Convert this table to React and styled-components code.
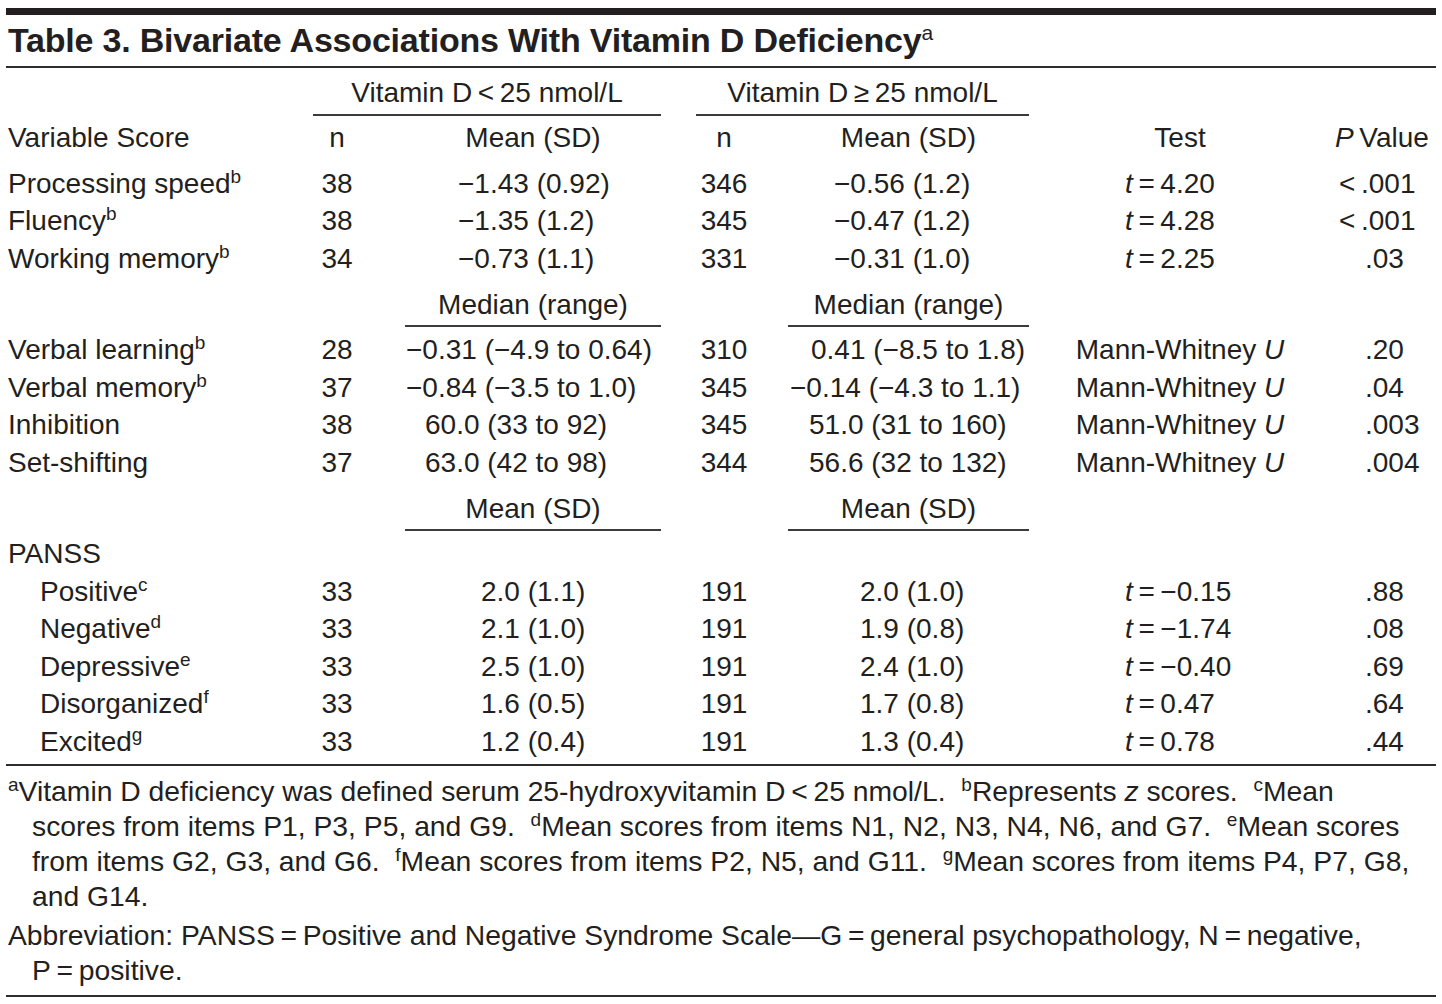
import React from 'react';
import styled, { createGlobalStyle } from 'styled-components';

const FONT = `"Liberation Sans", Arial, sans-serif`;
const INK = '#231f20';
const COLS = '307px 48px 44px 256px 39px 48px 40px 241px 302px 105px';

const Global = createGlobalStyle`
  html, body { margin: 0; padding: 0; background: #fff; }
  body { font-family: ${FONT}; color: ${INK}; }
`;

const Page = styled.div`
  width: 1430px;
  padding: 8px 0 0 6px;
`;

const TopBar = styled.div`
  height: 7px;
  background: ${INK};
`;

const Title = styled.h1`
  margin: 0;
  height: 51px;
  padding-left: 2px;
  font-size: 34px;
  font-weight: 700;
  line-height: 51px;
  letter-spacing: -0.2px;
  white-space: nowrap;
  border-bottom: 2px solid #2e2c2d;
`;

const Body = styled.div`
  padding-bottom: 4px;
  border-bottom: 2px solid #2e2c2d;
`;

const Row = styled.div`
  display: grid;
  grid-template-columns: ${COLS};
  font-size: 28px;
  line-height: 37.5px;
  white-space: nowrap;
  padding: ${(p) => p.$pad || '0'};
`;

const Spanner = styled.div`
  grid-column: ${(p) => p.$span};
  margin-left: ${(p) => p.$shift || 0}px;
  line-height: 38px;
  padding-bottom: 2px;
  text-align: center;
  border-bottom: 2px solid #3c3a3b;
`;

const SubHead = styled.div`
  grid-column: ${(p) => p.$col};
  line-height: 38px;
  padding-bottom: 1px;
  text-align: center;
  border-bottom: 2px solid #3c3a3b;
`;

const Label = styled.div`
  grid-column: 1;
  padding-left: ${(p) => (p.$sub ? 34 : 2)}px;
`;

const Count = styled.div`
  grid-column: ${(p) => p.$col};
  text-align: center;
`;

const Value = styled.div`
  grid-column: ${(p) => p.$col};
  padding-left: ${(p) => p.$indent || 0}px;
  text-align: ${(p) => (p.$center ? 'center' : 'left')};
`;

const Test = styled.div`
  grid-column: 9;
  text-align: ${(p) => (p.$left ? 'left' : 'center')};
  padding-left: ${(p) => (p.$left ? 96 : 0)}px;
`;

const PVal = styled.div`
  grid-column: 10;
  padding-left: ${(p) => p.$indent}px;
`;

const Sup = styled.sup`
  font-size: 19px;
  line-height: 0;
  vertical-align: 10px;
`;

const TitleSup = styled.sup`
  font-size: 21px;
  font-weight: 400;
  line-height: 0;
  vertical-align: 12px;
`;

const Notes = styled.div`
  padding: 7.5px 0 7.5px 2px;
  border-bottom: 2px solid #2e2c2d;
  font-size: 28.3px;
  line-height: 35px;
`;

const Note = styled.p`
  margin: ${(p) => (p.$gap ? '4px' : '0')} 0 0;
  padding-left: 24px;
  text-indent: -24px;
  white-space: nowrap;
`;

const NoteSup = styled.sup`
  font-size: 19px;
  line-height: 0;
  vertical-align: 10px;
`;

const T = '\u2009';
const tStat = (v) => (
  <>
    <i>t</i>
    {T}={T}
    {v}
  </>
);
const MW = (
  <>
    Mann-Whitney <i>U</i>
  </>
);

const meanRows = [
  { label: 'Processing speed', sup: 'b', n1: '38', v1: '−1.43 (0.92)', n2: '346', v2: '−0.56 (1.2)', t: '4.20', p: `<${T}.001` },
  { label: 'Fluency', sup: 'b', n1: '38', v1: '−1.35 (1.2)', n2: '345', v2: '−0.47 (1.2)', t: '4.28', p: `<${T}.001` },
  { label: 'Working memory', sup: 'b', n1: '34', v1: '−0.73 (1.1)', n2: '331', v2: '−0.31 (1.0)', t: '2.25', p: '.03' },
];

const medianRows = [
  { label: 'Verbal learning', sup: 'b', n1: '28', v1: '−0.31 (−4.9 to 0.64)', i1: 1, n2: '310', v2: '0.41 (−8.5 to 1.8)', i2: 23, p: '.20' },
  { label: 'Verbal memory', sup: 'b', n1: '37', v1: '−0.84 (−3.5 to 1.0)', i1: 1, n2: '345', v2: '−0.14 (−4.3 to 1.1)', i2: 2, p: '.04' },
  { label: 'Inhibition', n1: '38', v1: '60.0 (33 to 92)', i1: 20, n2: '345', v2: '51.0 (31 to 160)', i2: 21, p: '.003' },
  { label: 'Set-shifting', n1: '37', v1: '63.0 (42 to 98)', i1: 20, n2: '344', v2: '56.6 (32 to 132)', i2: 21, p: '.004' },
];

const panssRows = [
  { label: 'Positive', sup: 'c', v1: '2.0 (1.1)', v2: '2.0 (1.0)', t: '−0.15', p: '.88' },
  { label: 'Negative', sup: 'd', v1: '2.1 (1.0)', v2: '1.9 (0.8)', t: '−1.74', p: '.08' },
  { label: 'Depressive', sup: 'e', v1: '2.5 (1.0)', v2: '2.4 (1.0)', t: '−0.40', p: '.69' },
  { label: 'Disorganized', sup: 'f', v1: '1.6 (0.5)', v2: '1.7 (0.8)', t: '0.47', p: '.64' },
  { label: 'Excited', sup: 'g', v1: '1.2 (0.4)', v2: '1.3 (0.4)', t: '0.78', p: '.44' },
];

const pIndent = (p) => (p.startsWith('<') ? 8 : 34);

function LabelCell({ label, sup, sub }) {
  return (
    <Label $sub={sub}>
      {label}
      {sup && <Sup>{sup}</Sup>}
    </Label>
  );
}

export default function App() {
  return (
    <Page>
      <Global />
      <TopBar />
      <Title>
        Table 3. Bivariate Associations With Vitamin D Deficiency<TitleSup>a</TitleSup>
      </Title>
      <Body>
        <Row $pad="6px 0 0">
          <Spanner $span="2 / 5">Vitamin D{T}&lt;{T}25 nmol/L</Spanner>
          <Spanner $span="6 / 9" $shift={-4}>Vitamin D{T}≥{T}25 nmol/L</Spanner>
        </Row>
        <Row $pad="3px 0 8px">
          <Label>Variable Score</Label>
          <Count $col={2}>n</Count>
          <Value $col={4} $center>Mean (SD)</Value>
          <Count $col={6}>n</Count>
          <Value $col={8} $center>Mean (SD)</Value>
          <Test>Test</Test>
          <PVal $indent={4}>
            <i>P</i>{'\u2009'}Value
          </PVal>
        </Row>
        {meanRows.map((r) => (
          <Row key={r.label}>
            <LabelCell label={r.label} sup={r.sup} />
            <Count $col={2}>{r.n1}</Count>
            <Value $col={4} $indent={53}>{r.v1}</Value>
            <Count $col={6}>{r.n2}</Count>
            <Value $col={8} $indent={46}>{r.v2}</Value>
            <Test $left>{tStat(r.t)}</Test>
            <PVal $indent={pIndent(r.p)}>{r.p}</PVal>
          </Row>
        ))}
        <Row $pad="9px 0 4px">
          <SubHead $col={4}>Median (range)</SubHead>
          <SubHead $col={8}>Median (range)</SubHead>
        </Row>
        {medianRows.map((r) => (
          <Row key={r.label}>
            <LabelCell label={r.label} sup={r.sup} />
            <Count $col={2}>{r.n1}</Count>
            <Value $col={4} $indent={r.i1}>{r.v1}</Value>
            <Count $col={6}>{r.n2}</Count>
            <Value $col={8} $indent={r.i2}>{r.v2}</Value>
            <Test>{MW}</Test>
            <PVal $indent={pIndent(r.p)}>{r.p}</PVal>
          </Row>
        ))}
        <Row $pad="9px 0 4px">
          <SubHead $col={4}>Mean (SD)</SubHead>
          <SubHead $col={8}>Mean (SD)</SubHead>
        </Row>
        <Row>
          <Label>PANSS</Label>
        </Row>
        {panssRows.map((r) => (
          <Row key={r.label}>
            <LabelCell label={r.label} sup={r.sup} sub />
            <Count $col={2}>33</Count>
            <Value $col={4} $indent={76}>{r.v1}</Value>
            <Count $col={6}>191</Count>
            <Value $col={8} $indent={72}>{r.v2}</Value>
            <Test $left>{tStat(r.t)}</Test>
            <PVal $indent={pIndent(r.p)}>{r.p}</PVal>
          </Row>
        ))}
      </Body>
      <Notes>
        <Note>
          <NoteSup>a</NoteSup>Vitamin D deficiency was defined serum 25-hydroxyvitamin D{T}&lt;{T}25 nmol/L.{'\u00a0 '}
          <NoteSup>b</NoteSup>Represents <i>z</i> scores.{'\u00a0 '}
          <NoteSup>c</NoteSup>Mean
          <br />
          scores from items P1, P3, P5, and G9.{'\u00a0 '}
          <NoteSup>d</NoteSup>Mean scores from items N1, N2, N3, N4, N6, and G7.{'\u00a0 '}
          <NoteSup>e</NoteSup>Mean scores
          <br />
          from items G2, G3, and G6.{'\u00a0 '}
          <NoteSup>f</NoteSup>Mean scores from items P2, N5, and G11.{'\u00a0 '}
          <NoteSup>g</NoteSup>Mean scores from items P4, P7, G8,
          <br />
          and G14.
        </Note>
        <Note $gap>
          Abbreviation: PANSS{T}={T}Positive and Negative Syndrome Scale—G{T}={T}general psychopathology, N{T}={T}negative,
          <br />
          P{T}={T}positive.
        </Note>
      </Notes>
    </Page>
  );
}
